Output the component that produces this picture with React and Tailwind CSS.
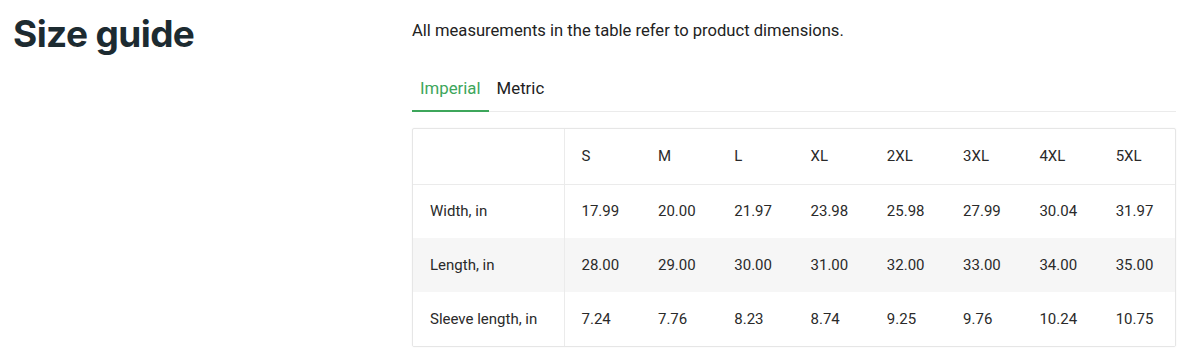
import React from "react";

const sizes = ["S", "M", "L", "XL", "2XL", "3XL", "4XL", "5XL"];
const rows = [
  { label: "Width, in", values: ["17.99", "20.00", "21.97", "23.98", "25.98", "27.99", "30.04", "31.97"] },
  { label: "Length, in", values: ["28.00", "29.00", "30.00", "31.00", "32.00", "33.00", "34.00", "35.00"], shaded: true },
  { label: "Sleeve length, in", values: ["7.24", "7.76", "8.23", "8.74", "9.25", "9.76", "10.24", "10.75"] },
];

export default function App() {
  return (
    <div
      className="flex h-[363px] w-[1200px] bg-white text-[#212121]"
      style={{ fontFamily: "Roboto, sans-serif" }}
    >
      <div className="w-[412px] pl-[13px] pt-[12px]">
        <h1
          className="text-[37px] font-bold leading-[44px] tracking-[-0.6px] text-[#1d2b31]"
          style={{ fontFamily: "Inter, sans-serif" }}
        >
          Size guide
        </h1>
      </div>
      <div className="w-[764px] pt-[19px]">
        <p className="text-[16.6px] leading-[24px] text-[#222]">
          All measurements in the table refer to product dimensions.
        </p>
        <div className="mt-[25px] flex border-b border-[#ebebeb]">
          <div className="-mb-px border-b-2 border-[#3da65b] px-[8px] pb-[10px] pt-[8px] text-[16.8px] leading-[24px] text-[#3da65b]">
            Imperial
          </div>
          <div className="px-[8px] pb-[10px] pt-[8px] text-[16.8px] leading-[24px] text-[#222]">
            Metric
          </div>
        </div>
        <div className="mt-[16px] overflow-hidden rounded-[2px] border border-[#e6e6e6] shadow-[0_0_2px_rgba(0,0,0,0.05)]">
          <table className="w-full border-collapse text-[15px] text-[#2a2a2a]">
            <tbody>
              <tr className="h-[55px] border-b border-[#ebebeb]">
                <td className="w-[151px] border-r border-[#ebebeb]" />
                {sizes.map((s) => (
                  <td key={s} className="pl-[17px] text-left">
                    {s}
                  </td>
                ))}
              </tr>
              {rows.map((r) => (
                <tr key={r.label} className={"h-[54px] " + (r.shaded ? "bg-[#f6f6f6]" : "bg-white")}>
                  <td className="w-[151px] border-r border-[#ebebeb] pl-[17px]">{r.label}</td>
                  {r.values.map((v, i) => (
                    <td key={i} className="pl-[17px]">
                      {v}
                    </td>
                  ))}
                </tr>
              ))}
            </tbody>
          </table>
        </div>
      </div>
    </div>
  );
}
